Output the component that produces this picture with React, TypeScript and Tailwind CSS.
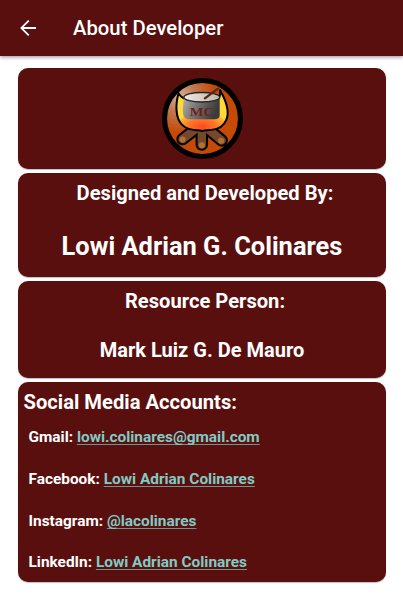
import type { ReactNode } from "react";

function Logo() {
  return (
    <svg viewBox="36 37 240 240" className="mb-px h-[81px] w-[81px]" aria-label="MC">
      <defs>
        <radialGradient id="disc" gradientUnits="userSpaceOnUse" cx="88" cy="92" r="105">
          <stop offset="0" stopColor="#d8b09c" />
          <stop offset="0.45" stopColor="#c27850" />
          <stop offset="1" stopColor="#c54a08" />
        </radialGradient>
        <radialGradient
          id="fire"
          gradientUnits="userSpaceOnUse"
          cx="0"
          cy="0"
          r="1"
          gradientTransform="translate(155 182) scale(80 44)"
        >
          <stop offset="0" stopColor="#ff4a1c" />
          <stop offset="0.5" stopColor="#ff7428" />
          <stop offset="0.9" stopColor="#ffb52c" />
          <stop offset="1" stopColor="#ffd83a" />
        </radialGradient>
        <linearGradient id="pot" x1="0" x2="1" y1="0" y2="0.25">
          <stop offset="0" stopColor="#b4b0ac" />
          <stop offset="0.4" stopColor="#7c7a7a" />
          <stop offset="1" stopColor="#3b3b3b" />
        </linearGradient>
        <linearGradient id="soup" x1="0" x2="1" y1="0" y2="0">
          <stop offset="0" stopColor="#eee9e4" />
          <stop offset="1" stopColor="#bfb6aa" />
        </linearGradient>
      </defs>
      <circle cx="156" cy="157" r="112.5" fill="url(#disc)" stroke="#000" strokeWidth="15" />
      <g strokeLinecap="round" fill="none">
        <g stroke="#000" strokeWidth="37">
          <path d="M146 180 L97 218" />
          <path d="M162 180 L213 222" />
          <path d="M154 186 L154 234" />
        </g>
        <g stroke="#75482c" strokeWidth="25">
          <path d="M146 180 L97 218" />
          <path d="M162 180 L213 222" />
          <path d="M154 186 L154 234" />
        </g>
      </g>
      <g fill="#b07030">
        <circle cx="97" cy="219" r="9" />
        <circle cx="154" cy="236" r="9" />
        <circle cx="211" cy="223" r="9" />
      </g>
      <path
        d="M85 82 C75 117 76 157 96 176 C114 195 137 190 155 194 C177 190 204 194 220 172 C239 148 230 111 208 73 C210 91 206 96 201 101 L108 101 C99 97 89 91 85 82 Z"
        fill="url(#fire)"
        stroke="#000"
        strokeWidth="6"
        strokeLinejoin="round"
      />
      <path
        d="M101 93 C99 117 95 139 101 151 C105 160 118 159 130 159 L181 159 C199 160 208 158 207 145 L207 91 Z"
        fill="url(#pot)"
      />
      <ellipse cx="154" cy="94" rx="53" ry="14" fill="url(#soup)" stroke="#252525" strokeWidth="4" />
      <path d="M161 99 L204 67" stroke="#54291d" strokeWidth="7" fill="none" />
      <text
        x="154"
        y="149"
        textAnchor="middle"
        textLength="72"
        lengthAdjust="spacingAndGlyphs"
        fontFamily="Liberation Serif, serif"
        fontWeight="700"
        fontSize="40"
        fill="#701f19"
      >
        MC
      </text>
    </svg>
  );
}

function Card({ className, children }: { className: string; children: ReactNode }) {
  return (
    <section
      className={`w-full rounded-[10px] bg-[#580f0e] font-bold shadow-[0_1px_1px_rgba(0,0,0,0.25)] ${className}`}
    >
      {children}
    </section>
  );
}

const accounts = [
  { label: "Gmail:", value: "lowi.colinares@gmail.com" },
  { label: "Facebook:", value: "Lowi Adrian Colinares" },
  { label: "Instagram:", value: "@lacolinares" },
  { label: "LinkedIn:", value: "Lowi Adrian Colinares" },
];

export default function App() {
  return (
    <div className="h-[614px] w-full overflow-hidden bg-white font-['Roboto',sans-serif] text-white">
      <header className="flex h-14 items-center bg-[#580f0e] pl-5 shadow-[0_1px_4px_rgba(0,0,0,0.45)]">
        <svg viewBox="4 4 16 16" className="h-4 w-4" fill="#fff">
          <path d="M20 11.1H7.6l5.9-5.8L12.1 4l-8 8 8 8 1.3-1.3-5.8-5.8H20v-1.8z" />
        </svg>
        <h1 className="ml-[37px] text-[20.3px] leading-6 font-medium">About Developer</h1>
      </header>
      <main className="flex flex-col gap-1 pt-3 pr-[17px] pl-[18px]">
        <Card className="flex h-[101px] items-center justify-center">
          <Logo />
        </Card>
        <Card className="h-[104.2px] pt-2 text-center">
          <h2 className="pl-[6px] text-[20.15px] leading-6">Designed and Developed By:</h2>
          <p className="mt-[25px] text-[25.45px] leading-8">Lowi Adrian G. Colinares</p>
        </Card>
        <Card className="h-[96.8px] pt-[7.7px] text-center">
          <h2 className="pl-[6px] text-[20.15px] leading-6">Resource Person:</h2>
          <p className="mt-[25px] text-[20.05px] leading-6">Mark Luiz G. De Mauro</p>
        </Card>
        <Card className="h-[200px] pt-2 pl-[5.5px]">
          <h2 className="text-[20.2px] leading-6">Social Media Accounts:</h2>
          <ul className="mt-[13px] flex flex-col gap-[21.8px] pl-[5px] text-[15.4px] leading-5">
            {accounts.map(({ label, value }) => (
              <li key={label}>
                {label}{" "}
                <a className="text-[#80cbc4] underline decoration-[#80cbc4]/70 decoration-1 underline-offset-[1.5px] [text-decoration-skip-ink:none]">
                  {value}
                </a>
              </li>
            ))}
          </ul>
        </Card>
      </main>
    </div>
  );
}
